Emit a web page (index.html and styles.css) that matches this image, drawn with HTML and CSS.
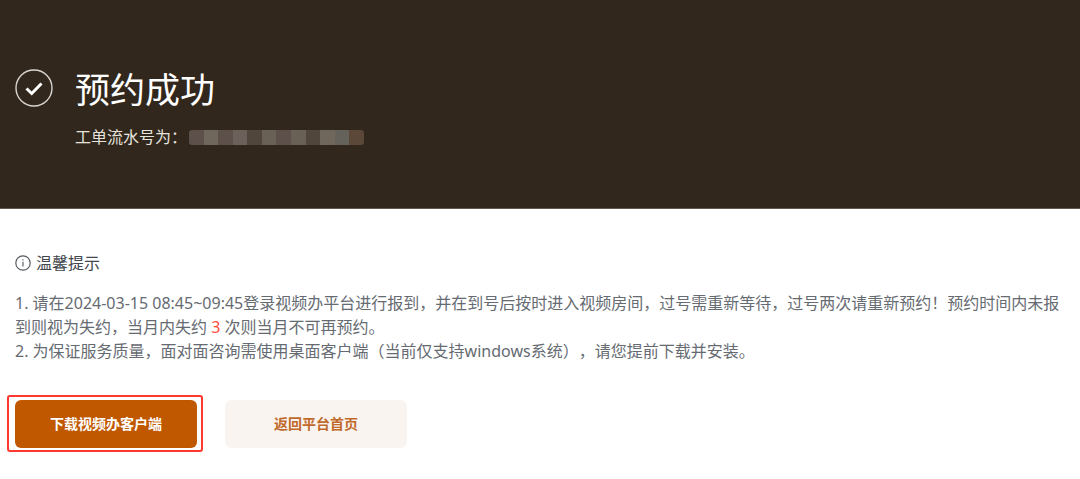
FILE: index.html
```
<!DOCTYPE html>
<html lang="zh-CN">
<head>
<meta charset="UTF-8">
<meta name="viewport" content="width=device-width, initial-scale=1.0">
<title>预约成功</title>
<link rel="stylesheet" href="styles.css">
</head>
<body>
  <header class="banner">
    <svg class="success-icon" viewBox="0 0 38 38" aria-hidden="true">
      <circle cx="19" cy="19" r="18" fill="none" stroke="#d8d4d0" stroke-width="1.4"/>
      <path d="M11.5 19.5l5.2 5 9.8-10" fill="none" stroke="#fff" stroke-width="3"/>
    </svg>
    <div class="banner-text">
      <h1>预约成功</h1>
      <div class="serial">
        <span>工单流水号为：</span>
        <!-- 流水号打码 -->
        <span class="mask">
          <i class="c1"></i><i class="c2"></i><i class="c1"></i><i class="c3"></i><i class="c4"></i><i class="c5"></i><i class="c1"></i><i class="c5"></i><i class="c4"></i><i class="c2"></i><i class="c6"></i><i class="c7"></i>
        </span>
      </div>
    </div>
  </header>

  <main class="content">
    <h2>
      <svg class="info-icon" viewBox="0 0 16 16" aria-hidden="true">
        <circle cx="8" cy="8" r="7.2" fill="none" stroke="#555b61" stroke-width="1.2"/>
        <path d="M8 6.8v4.8M8 4.2v1.4" stroke="#6b7177" stroke-width="1.3"/>
      </svg>
      温馨提示
    </h2>
    <div class="tips">
      <p>1. 请在2024-03-15 08:45~09:45登录视频办平台进行报到，并在到号后按时进入视频房间，过号需重新等待，过号两次请重新预约！预约时间内未报到则视为失约，当月内失约 <span class="count">3</span> 次则当月不可再预约。</p>
      <p>2. 为保证服务质量，面对面咨询需使用桌面客户端（当前仅支持windows系统），请您提前下载并安装。</p>
    </div>
    <div class="actions">
      <div class="highlight">
        <button type="button" class="btn primary">下载视频办客户端</button>
      </div>
      <button type="button" class="btn plain">返回平台首页</button>
    </div>
  </main>
</body>
</html>
```

FILE: styles.css
```
* {
  box-sizing: border-box;
}
body {
  margin: 0;
  background-color: #fff;
  color: #666b72;
  font-family: "Noto Sans", "Noto Sans CJK SC", sans-serif;
  font-size: 16px;
  line-height: 24px;
  text-spacing-trim: space-all;
}
h1, h2, p {
  margin: 0;
}
.banner {
  display: flex;
  gap: 22px;
  padding: 66px 15px 59px;
  background-color: #31271c;
  border-bottom: 1px solid #62594f;
  color: #fff;
}
.success-icon {
  width: 38px;
  height: 38px;
  margin-top: 3px;
}
h1 {
  font-size: 35px;
  font-weight: 400;
  line-height: 48px;
}
.serial {
  display: flex;
  align-items: center;
  gap: 2px;
  margin-top: 11px;
  color: #e6e3df;
}
.mask {
  display: flex;
  width: 175px;
  border-radius: 3px;
  overflow: hidden;
}
.mask i {
  flex: 1;
  height: 15px;
}
.c1 { background-color: #5d504b; }
.c2 { background-color: #70675c; }
.c3 { background-color: #6b605a; }
.c4 { background-color: #50463b; }
.c5 { background-color: #696155; }
.c6 { background-color: #65615b; }
.c7 { background-color: #5b4839; }
.content {
  padding: 42px 15px 30px;
}
h2 {
  display: flex;
  align-items: center;
  gap: 5px;
  color: #42474d;
  font-size: 16px;
  font-weight: 400;
}
.info-icon {
  width: 16px;
  height: 16px;
}
.tips {
  margin-top: 16px;
}
.count {
  color: #ff4d3f;
}
.actions {
  display: flex;
  align-items: center;
  gap: 22px;
  margin: 32px 0 0 -8px;
}
.highlight {
  padding: 3px 4px 2px 6px;
  border: 2px solid #ff3830;
  border-radius: 3px;
}
.btn {
  display: block;
  width: 182px;
  height: 48px;
  padding: 0 0 2px;
  border: none;
  border-radius: 6px;
  font-family: inherit;
  font-size: 14px;
  font-weight: 700;
  cursor: pointer;
}
.primary {
  background-color: #c05800;
  color: #fff;
}
.plain {
  background-color: #faf4f0;
  color: #c0692a;
}
```
